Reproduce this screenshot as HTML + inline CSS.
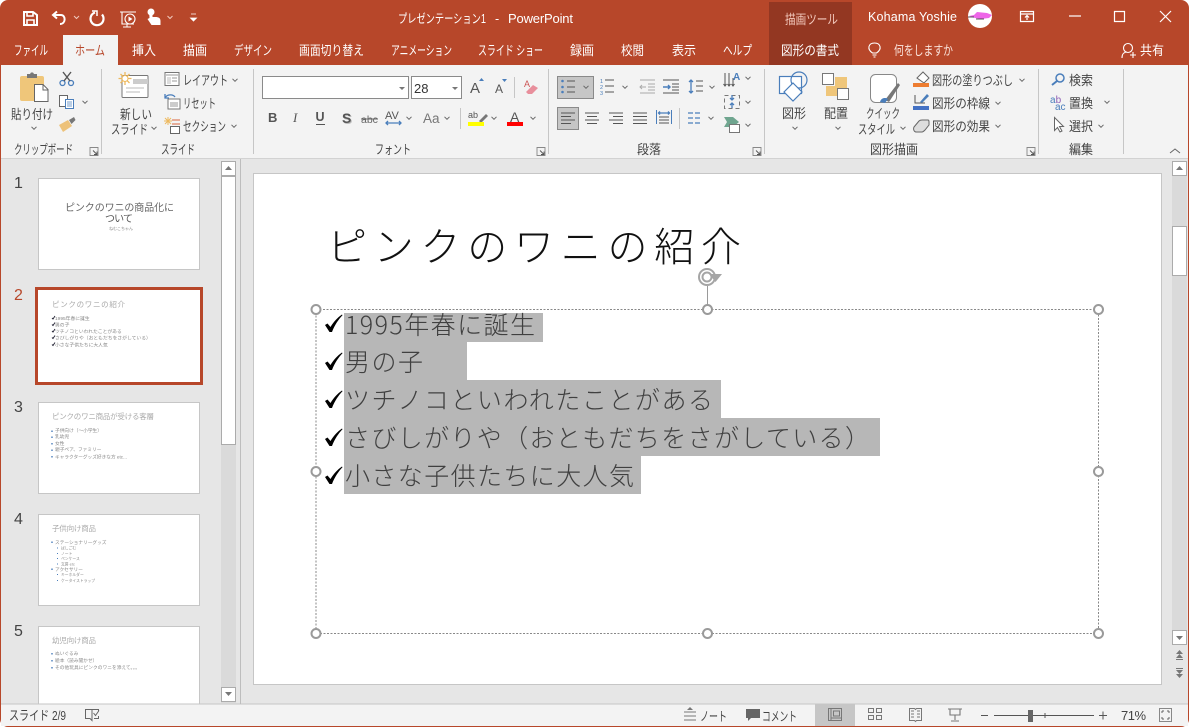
<!DOCTYPE html>
<html lang="ja"><head><meta charset="utf-8"><title>PowerPoint</title>
<style>
html,body{margin:0;padding:0;width:1189px;height:727px;overflow:hidden;background:#fff}
svg{display:block}
text{font-family:"Liberation Sans","Noto Sans CJK JP",sans-serif;font-size:13px;fill:#444}
.w text,text.w{fill:#fff}
.thin{font-weight:300}
.car{fill:none;stroke:#666;stroke-width:1}
.blu{stroke:#4a7ebb;fill:none;stroke-width:1.3}
.h{fill:#fff;stroke:#9a9a9a;stroke-width:2}
.b{font-family:"Noto Sans CJK JP","Liberation Sans",sans-serif;font-weight:300;font-size:25px;fill:#404040}
</style></head><body>
<svg width="1189" height="727" viewBox="0 0 1189 727" xmlns="http://www.w3.org/2000/svg">
<defs>
<g id="c"><path d="M-2.5 -1.2L0 1.3L2.5 -1.2" class="car"/></g>
<g id="launch"><path d="M0 0H8V8H0Z" fill="none" stroke="#888" stroke-width=".9"/><path d="M3 3L7 7M7 4V7H4" fill="none" stroke="#555" stroke-width=".9"/></g>
</defs>
<rect width="1189" height="727" rx="8" fill="#B7472A"/>
<!-- title bar -->
<rect x="769" y="2" width="83" height="63" fill="#933722"/>
<g fill="none" stroke="#fff" stroke-width="2">
<path d="M24 12H33L37 15V25H24Z"/><path d="M27 12V16H33V12M27 25V20H34V25" stroke-width="1.6"/>
<path d="M54 15H61C66 15 66 24 60 24" stroke-width="2"/><path d="M57 11.5L53 15L57 18.5" stroke-width="2"/>
<path d="M95 12.5A6.5 6.5 0 1 0 102 14.5" stroke-width="2.200"/><path d="M92 11H97V16" stroke-width="1.500"/>
<path d="M120 12H136M122 12V24H134" stroke-width="1.100"/><circle cx="130" cy="19" r="5" stroke-width="1.100"/><path d="M128.500 16.500L132.500 19L128.500 21.500Z" fill="#fff" stroke="none"/><path d="M127 24V27M123 27H131" stroke-width="1"/>
</g>
<path d="M149 10h3.500v7h3c3 0 5 1 5 4v4h-9l-4-6 2-1 z" fill="#fff"/><circle cx="151" cy="12" r="3.500" fill="#fff"/>
<path d="M74 16l2.500 2.500 2.500-2.500M167.500 16l2.500 2.500 2.500-2.500" fill="none" stroke="#f0c8bc"/>
<path d="M191 14h5M190.500 18h6l-3 3z" fill="#fff" stroke="#fff" stroke-width=".8"/>
<text x="398" y="23" style="fill:#fff;font-size:12.500px" textLength="88" lengthAdjust="spacingAndGlyphs">プレゼンテーション1</text>
<text x="495" y="23" style="fill:#fff;font-size:12.500px">-</text>
<text x="508" y="23" style="fill:#fff;font-size:13px" textLength="65">PowerPoint</text>
<text x="785" y="24" style="fill:#f3c9bd;font-size:13px" textLength="53" lengthAdjust="spacingAndGlyphs">描画ツール</text>
<text x="868" y="21" style="fill:#fff;font-size:12.500px" textLength="89">Kohama Yoshie</text>
<circle cx="980" cy="16" r="12" fill="#fff"/>
<path d="M969 16l5-1 3-3 10 1 5 2-3 3-8 1-6-1z" fill="#ee66e8"/><path d="M968 17h6M976 19h8" stroke="#222" stroke-width=".8"/>
<g fill="none" stroke="#fff" stroke-width="1.200">
<path d="M1020.500 11.500H1033.500V21.500H1020.500ZM1021 14H1033M1027 20V16M1025 17.500L1027 15.500L1029 17.500"/>
<path d="M1069 16H1081" /><path d="M1114.500 11.500H1124.500V21.500H1114.500Z"/><path d="M1160 11L1171 22M1171 11L1160 22"/>
</g>
<!-- tabs -->
<rect x="63" y="35" width="55" height="31" fill="#F3F3F3"/>
<rect x="769" y="35" width="83" height="30" fill="#933722"/>
<g class="w">
<text x="14" y="55" textLength="34" lengthAdjust="spacingAndGlyphs">ファイル</text>
<text x="75" y="55" style="fill:#B7472A" textLength="30" lengthAdjust="spacingAndGlyphs">ホーム</text>
<text x="132" y="55" textLength="24" lengthAdjust="spacingAndGlyphs">挿入</text>
<text x="183" y="55" textLength="24" lengthAdjust="spacingAndGlyphs">描画</text>
<text x="234" y="55" textLength="38" lengthAdjust="spacingAndGlyphs">デザイン</text>
<text x="299" y="55" textLength="65" lengthAdjust="spacingAndGlyphs">画面切り替え</text>
<text x="391" y="55" textLength="61" lengthAdjust="spacingAndGlyphs">アニメーション</text>
<text x="478" y="55" textLength="65" lengthAdjust="spacingAndGlyphs">スライド ショー</text>
<text x="570" y="55" textLength="24" lengthAdjust="spacingAndGlyphs">録画</text>
<text x="621" y="55" textLength="23" lengthAdjust="spacingAndGlyphs">校閲</text>
<text x="672" y="55" textLength="24" lengthAdjust="spacingAndGlyphs">表示</text>
<text x="723" y="55" textLength="29" lengthAdjust="spacingAndGlyphs">ヘルプ</text>
<text x="781" y="55" textLength="58" lengthAdjust="spacingAndGlyphs">図形の書式</text>
<text x="894" y="55" style="fill:#fbe6df" textLength="59" lengthAdjust="spacingAndGlyphs">何をしますか</text>
<text x="1140" y="55" textLength="24" lengthAdjust="spacingAndGlyphs">共有</text>
</g>
<g fill="none" stroke="#fff" stroke-width="1.100"><path d="M872.500 53c-6-4-4-10 2-10s8 6 2 10zM872.500 55h4M873.500 57h2"/><circle cx="1128" cy="48" r="4.500"/><path d="M1122 58c0-5 3-6 5-6M1130 55h6M1133 52v6"/></g>
<!-- ribbon -->
<rect x="1" y="65" width="1187" height="94" fill="#F3F3F3"/>
<rect x="1" y="158" width="1187" height="1" fill="#d2d2d2"/>
<!-- body -->
<rect x="1" y="159" width="1187" height="545" fill="#E6E6E6"/>
<!-- separators -->
<g fill="#c6c6c6"><rect x="101" y="69" width="1" height="85"/><rect x="253" y="69" width="1" height="85"/><rect x="548" y="69" width="1" height="85"/><rect x="764" y="69" width="1" height="85"/><rect x="1038" y="69" width="1" height="85"/><rect x="1123" y="69" width="1" height="85"/>
<rect x="514" y="77" width="1" height="21"/><rect x="460" y="108" width="1" height="21"/><rect x="679" y="108" width="1" height="21"/></g>
<!-- clipboard -->
<rect x="20" y="76" width="24" height="25" rx="2" fill="#EFC67A"/><path d="M27 78V74H30L31 72.500H33L34 74H37V78Z" fill="#777"/>
<path d="M34.500 84.500H43L48 89.500V101.500H34.500Z" fill="#fff" stroke="#666"/><path d="M43 85V90H48" fill="none" stroke="#666"/>
<text x="11" y="119" textLength="42" lengthAdjust="spacingAndGlyphs">貼り付け</text><use href="#c" x="34" y="128"/>
<g fill="none" stroke="#4a7ebb" stroke-width="1.300"><circle cx="62.500" cy="83" r="2.500"/><circle cx="71" cy="83" r="2.500"/></g><path d="M64 81L71 72M70 81L63 72" stroke="#555" stroke-width="1.400"/>
<rect x="59.500" y="95.500" width="8" height="11" fill="#fff" stroke="#666"/><rect x="65.500" y="99.500" width="8" height="9" fill="#fff" stroke="#4a7ebb"/><path d="M67 102h5M67 104h5M67 106h5" stroke="#4a7ebb" stroke-width=".8"/><use href="#c" x="85" y="102"/>
<path d="M59 125l9-5 4 6-9 6z" fill="#EDC27A"/><path d="M69 120l5-3 1.500 3-4 4z" fill="#777"/>
<text x="14" y="154" textLength="59" lengthAdjust="spacingAndGlyphs">クリップボード</text><use href="#launch" x="90" y="147.500"/>
<!-- slide -->
<rect x="122" y="75.500" width="26" height="22" rx="1" fill="#fff" stroke="#777"/><rect x="133" y="79" width="15" height="5" fill="#ccc"/><path d="M126 88h18M126 92h14" stroke="#bbb"/>
<path d="M125 72v13M118.500 78.500h13M120.500 74l9 9M129.500 74l-9 9" stroke="#EDB95E" stroke-width="1.300"/><circle cx="125" cy="78.500" r="3" fill="#fff" stroke="#EDB95E"/>
<text x="120" y="119" textLength="32" lengthAdjust="spacingAndGlyphs">新しい</text><text x="111" y="134" textLength="37" lengthAdjust="spacingAndGlyphs">スライド</text><use href="#c" x="154" y="128"/>
<rect x="165" y="72.500" width="14" height="13" fill="#fff" stroke="#777"/><rect x="167" y="77" width="4" height="7" fill="#ddd"/><path d="M166 75h12M172 78h5M172 81h5" stroke="#999"/>
<rect x="168" y="99" width="12" height="10" fill="#fff" stroke="#777"/><path d="M165 98c2-4 8-4 10-1M165 94v4h4" fill="none" stroke="#4a7ebb" stroke-width="1.300"/><rect x="170" y="102" width="8" height="5" fill="#ccc"/>
<path d="M168 117v8M164 121h8M165 118l6 6M171 118l-6 6" stroke="#EDB95E"/><path d="M172 120h8M172 124h8" stroke="#D9663E"/><rect x="170.500" y="126.500" width="9" height="7" fill="#fff" stroke="#666"/>
<text x="183" y="85" textLength="45" lengthAdjust="spacingAndGlyphs">レイアウト</text><use href="#c" x="235" y="80"/>
<text x="183" y="108" textLength="33" lengthAdjust="spacingAndGlyphs">リセット</text>
<text x="183" y="131" textLength="43" lengthAdjust="spacingAndGlyphs">セクション</text><use href="#c" x="234" y="126"/>
<text x="161" y="154" textLength="34" lengthAdjust="spacingAndGlyphs">スライド</text>
<!-- font -->
<rect x="262.500" y="76.500" width="146" height="22" fill="#fff" stroke="#8a8a8a"/><rect x="411.500" y="76.500" width="50" height="22" fill="#fff" stroke="#8a8a8a"/>
<path d="M399 87h6l-3 3zM452 87h6l-3 3z" fill="#777"/>
<text x="414" y="93" style="font-size:13px;fill:#333">28</text>
<text x="470" y="93" style="font-size:15px;fill:#555">A</text><path d="M479 81h5l-2.500-3z" fill="#4a7ebb"/>
<text x="495" y="93" style="font-size:12px;fill:#555">A</text><path d="M502 79h5l-2.500 3z" fill="#4a7ebb"/>
<text x="524" y="87" style="font-size:9px;fill:#c55">A</text><path d="M526 92l7-7 5 3-6 6h-4z" fill="#E88F9C"/>
<text x="268" y="122" style="font-size:13px;font-weight:bold;fill:#555">B</text>
<text x="293" y="122" style="font-size:13px;font-style:italic;font-family:'Liberation Serif';fill:#555">I</text>
<text x="315.500" y="121" style="font-size:12.500px;font-weight:bold;fill:#555">U</text><path d="M316 124.500h9" stroke="#555"/>
<text x="343" y="124" style="font-size:14px;font-weight:bold;fill:#bbb">S</text><text x="342" y="123" style="font-size:14px;font-weight:bold;fill:#555">S</text>
<text x="361" y="123" style="font-size:10.500px;fill:#666">abc</text><path d="M361 119h17" stroke="#666"/>
<text x="385" y="119" style="font-size:11px;fill:#555">AV</text><path d="M386 123h15M388 121l-2 2 2 2M399 121l2 2-2 2" class="blu"/><use href="#c" x="409" y="118"/>
<text x="423" y="123" style="font-size:13.500px;fill:#777">Aa</text><use href="#c" x="447" y="118"/>
<text x="468" y="118" style="font-size:9px;fill:#555">ab</text><path d="M479 121l7-7 2 2-7 7z" fill="#777"/><rect x="468" y="122" width="16" height="4" fill="#FFFF00"/><use href="#c" x="494" y="118"/>
<text x="510" y="122" style="font-size:14px;fill:#555">A</text><rect x="507" y="122" width="16" height="4" fill="#FF0000"/><use href="#c" x="533" y="118"/>
<text x="375" y="154" textLength="36" lengthAdjust="spacingAndGlyphs">フォント</text><use href="#launch" x="537" y="147.500"/>
<!-- paragraph -->
<rect x="557.500" y="76.500" width="36" height="22" fill="#C6C6C6" stroke="#8a8a8a"/>
<path d="M567 81h8M567 87h8M567 92h8" stroke="#555"/><g fill="#4a7ebb"><circle cx="562.500" cy="81" r="1.300"/><circle cx="562.500" cy="87" r="1.300"/><circle cx="562.500" cy="92" r="1.300"/></g><use href="#c" x="586" y="87"/>
<path d="M605 80h9M605 86h9M605 92h9" stroke="#555"/><text x="600" y="83" style="font-size:5.500px;fill:#4a7ebb">1</text><text x="600" y="89" style="font-size:5.500px;fill:#4a7ebb">2</text><text x="600" y="95" style="font-size:5.500px;fill:#4a7ebb">3</text><use href="#c" x="625" y="87"/>
<path d="M640 80h15M648 84h7M648 87h7M648 90h7M640 93h15" stroke="#aaa"/><path d="M646 87h-6M642 85l-2 2 2 2" stroke="#aaa" fill="none"/>
<path d="M663 80h16M672 84h7M672 87h7M672 90h7M663 93h16" stroke="#555"/><path d="M663 87h7M668 85l2 2-2 2" stroke="#4a7ebb" fill="none" stroke-width="1.400"/>
<path d="M691 80v13M689 82l2-2 2 2M689 91l2 2 2-2" class="blu"/><path d="M696 81h7M696 86h7M696 91h7" stroke="#555"/><use href="#c" x="712" y="87"/>
<path d="M725 73v13M729 73v13M733 78v8M723.500 84l1.500 2 1.500-2M727.500 84l1.500 2 1.500-2M731.500 84l1.500 2 1.500-2" stroke="#555" fill="none"/><text x="733" y="80" style="font-size:10px;font-weight:bold;fill:#4a7ebb">A</text><use href="#c" x="748" y="78"/>
<rect x="724.500" y="95.500" width="15" height="13" fill="none" stroke="#777" stroke-dasharray="4 3"/><path d="M732 95v5M730 98l2 2 2-2M732 108v-5M730 105l2-2 2 2" class="blu"/><use href="#c" x="748" y="102"/>
<path d="M724 117h9l6 5-6 5h-9l3-5z" fill="#6FA58F"/><rect x="729.500" y="124.500" width="10" height="8" fill="#fff" stroke="#777"/><use href="#c" x="748" y="125"/>
<rect x="557.500" y="107.500" width="21" height="22" fill="#C6C6C6" stroke="#8a8a8a"/>
<path d="M561 113h14M561 116.500h10M561 120h14M561 123.500h10" stroke="#555"/>
<path d="M585 113h14M587 116.500h10M585 120h14M587 123.500h10" stroke="#555"/>
<path d="M609 113h14M613 116.500h10M609 120h14M613 123.500h10" stroke="#555"/>
<path d="M633 113h14M633 116.500h14M633 120h14M633 123.500h14" stroke="#555"/>
<path d="M656.500 110v14M671.500 110v14" stroke="#4a7ebb"/><path d="M659 113h10M660 111.500l-1.500 1.500 1.500 1.500M668 111.500l1.500 1.500-1.500 1.500" class="blu" stroke-width="1"/><path d="M659 117h10M659 120h10M659 123h10" stroke="#555"/>
<path d="M688 113h5M688 118h5M688 123h5M695 113h5M695 118h5M695 123h5" stroke="#4a7ebb" stroke-width="1.200"/><use href="#c" x="711" y="118"/>
<text x="637" y="154" textLength="24" lengthAdjust="spacingAndGlyphs">段落</text><use href="#launch" x="753" y="147.500"/>
<!-- shapes -->
<rect x="779.500" y="76.500" width="22" height="17" fill="#fff" stroke="#4a7ebb" stroke-width="1.200"/><circle cx="799" cy="80" r="8" fill="none" stroke="#4a7ebb" stroke-width="1.200"/><path d="M793 83l9 9-9 9-9-9z" fill="#fff" stroke="#4a7ebb" stroke-width="1.200"/>
<text x="782" y="118" textLength="24" lengthAdjust="spacingAndGlyphs">図形</text><use href="#c" x="795" y="128"/>
<rect x="835" y="77" width="12" height="13" fill="#EFC67A"/><rect x="826" y="86" width="12" height="10" fill="#EFC67A"/><rect x="822.500" y="73.500" width="11" height="11" fill="#fff" stroke="#777"/><rect x="837.500" y="88.500" width="11" height="11" fill="#fff" stroke="#777"/>
<text x="824" y="118" textLength="24" lengthAdjust="spacingAndGlyphs">配置</text><use href="#c" x="838" y="128"/>
<rect x="870.500" y="74.500" width="26" height="28" rx="5" fill="#fff" stroke="#888"/><path d="M885 100l13-17 2 2-11 17z" fill="#777"/><path d="M880 102c1-4 5-5 8-3l-3 4z" fill="#4a7ebb"/>
<text x="866" y="118" textLength="34" lengthAdjust="spacingAndGlyphs">クイック</text><text x="858" y="134" textLength="37" lengthAdjust="spacingAndGlyphs">スタイル</text><use href="#c" x="903" y="128"/>
<path d="M917 78l6-6 6 6-5 5z" fill="#fff" stroke="#666"/><rect x="913" y="83" width="16" height="4" fill="#ED7D31"/>
<path d="M915 95v8h10" fill="none" stroke="#555"/><path d="M920 102l7-8 2 2-7 7z" fill="#4a7ebb"/><rect x="913" y="106" width="16" height="4" fill="#4472C4"/>
<path d="M914 127l5-6c1-1 2-1 3-1h6c1 0 1 1 1 2v3l-4 5c-1 1-2 2-3 2h-6c-2 0-3-3-2-5z" fill="#ddd" stroke="#666"/>
<g><text x="932" y="85" textLength="81" lengthAdjust="spacingAndGlyphs">図形の塗りつぶし</text><use href="#c" x="1022" y="80"/>
<text x="932" y="108" textLength="58" lengthAdjust="spacingAndGlyphs">図形の枠線</text><use href="#c" x="998" y="103"/>
<text x="932" y="131" textLength="58" lengthAdjust="spacingAndGlyphs">図形の効果</text><use href="#c" x="998" y="126"/></g>
<text x="870" y="154" textLength="48" lengthAdjust="spacingAndGlyphs">図形描画</text><use href="#launch" x="1027" y="147.500"/>
<!-- editing -->
<circle cx="1060" cy="78" r="4" fill="none" stroke="#4a7ebb" stroke-width="1.500"/><path d="M1057 81l-5 4" stroke="#4a7ebb" stroke-width="2"/>
<text x="1050" y="103" style="font-size:10px;fill:#4a7ebb">a<tspan style="fill:#8e5fb5">b</tspan></text><text x="1055" y="110" style="font-size:10px;fill:#4a7ebb">ac</text>
<path d="M1054.500 117.500v13l3-3 2.500 4.500 2-1-2.500-4.500h4z" fill="#fff" stroke="#666"/>
<text x="1069" y="85" textLength="24" lengthAdjust="spacingAndGlyphs">検索</text>
<text x="1069" y="108" textLength="24" lengthAdjust="spacingAndGlyphs">置換</text><use href="#c" x="1107" y="102"/>
<text x="1069" y="131" textLength="24" lengthAdjust="spacingAndGlyphs">選択</text><use href="#c" x="1101" y="126"/>
<text x="1069" y="154" textLength="24" lengthAdjust="spacingAndGlyphs">編集</text>
<path d="M1170 153l5-4 5 4" fill="none" stroke="#666"/>
<!-- left pane -->
<text x="14" y="188" style="font-size:16px;fill:#444">1</text><text x="14" y="300" style="font-size:16px;fill:#B7472A">2</text><text x="14" y="412" style="font-size:16px;fill:#444">3</text><text x="14" y="524" style="font-size:16px;fill:#444">4</text><text x="14" y="636" style="font-size:16px;fill:#444">5</text>
<g fill="#fff" stroke="#c6c6c6"><rect x="38.500" y="178.500" width="161" height="91"/><rect x="38.500" y="402.500" width="161" height="91"/><rect x="38.500" y="514.500" width="161" height="91"/><rect x="38.500" y="626.500" width="161" height="90"/></g>
<rect x="36.500" y="288.500" width="165" height="95" fill="#fff" stroke="#B7472A" stroke-width="3"/>
<text x="65" y="211" style="font-size:10px;fill:#666" textLength="109" lengthAdjust="spacing">ピンクのワニの商品化に</text>
<text x="105" y="222" style="font-size:10px;fill:#555" textLength="28">ついて</text>
<text x="109" y="230" style="font-size:4px;fill:#888">ねむこちゃん</text>
<text x="52" y="307" style="font-size:7.500px;fill:#aaa" textLength="73">ピンクのワニの紹介</text>
<g><text x="55" y="320" style="font-size:4.800px;fill:#888">1995年春に誕生</text><text x="55" y="326.500" style="font-size:4.800px;fill:#888">男の子</text><text x="55" y="333" style="font-size:4.800px;fill:#888">ツチノコといわれたことがある</text><text x="55" y="339.500" style="font-size:4.800px;fill:#888">さびしがりや（おともだちをさがしている）</text><text x="55" y="346.500" style="font-size:4.800px;fill:#888">小さな子供たちに大人気</text></g>
<path d="M52 318l1 1 2-3M52 324.500l1 1 2-3M52 331l1 1 2-3M52 337.500l1 1 2-3M52 344.500l1 1 2-3" fill="none" stroke="#223" stroke-width=".9"/>
<text x="52" y="419" style="font-size:7.500px;fill:#aaa" textLength="102">ピンクのワニ商品が受ける客層</text>
<g><text x="55" y="432" style="font-size:4.700px;fill:#888">子供向け（〜小学生）</text><text x="55" y="438" style="font-size:4.700px;fill:#888">乳幼児</text><text x="55" y="445" style="font-size:4.700px;fill:#888">女性</text><text x="55" y="451" style="font-size:4.700px;fill:#888">親子ペア、ファミリー</text><text x="55" y="458.500" style="font-size:4.700px;fill:#888" textLength="72">キャラクターグッズ好きな方 etc...</text></g>
<path d="M52 430.500v1.500M52 436.500v1.500M52 443v1.500M52 449.500v1.500M52 456v1.500" stroke="#4a7ebb" stroke-width="1.400"/>
<text x="52" y="531" style="font-size:7.500px;fill:#aaa" textLength="44">子供向け商品</text>
<g><text x="55" y="544" style="font-size:4.700px;fill:#888">ステーショナリーグッズ</text><text x="61" y="549.500" style="font-size:3.800px;fill:#888">ぱしごむ</text><text x="61" y="555" style="font-size:3.800px;fill:#888">ノート</text><text x="61" y="560" style="font-size:3.800px;fill:#888">ペンケース</text><text x="61" y="565.500" style="font-size:3.800px;fill:#888">文房 etc</text><text x="55" y="571" style="font-size:4.700px;fill:#888">アクセサリー</text><text x="61" y="576" style="font-size:3.800px;fill:#888">キーホルダー</text><text x="61" y="582" style="font-size:3.800px;fill:#888">ケータイストラップ</text></g>
<path d="M52 541.500v1.500M52 568.500v1.500" stroke="#4a7ebb" stroke-width="1.400"/><path d="M57.500 547.500v1M57.500 553v1M57.500 558v1M57.500 563.500v1M57.500 574v1M57.500 580v1" stroke="#4a7ebb"/>
<text x="52" y="643" style="font-size:7.500px;fill:#aaa" textLength="44">幼児向け商品</text>
<g><text x="55" y="655" style="font-size:4.700px;fill:#888">ぬいぐるみ</text><text x="55" y="662" style="font-size:4.700px;fill:#888">絵本（読み聞かせ）</text><text x="55" y="669" style="font-size:4.700px;fill:#888" textLength="85">その他玩具にピンクのワニを添えて。。。</text></g>
<path d="M52 653v1.500M52 660v1.500M52 667v1.500" stroke="#4a7ebb" stroke-width="1.400"/>
<!-- status -->
<rect x="1" y="704" width="1187" height="22" fill="#F3F3F3"/>
<rect x="1" y="703.500" width="1187" height="1" fill="#c6c6c6"/>
<!-- left scrollbar -->
<rect x="221" y="161" width="15" height="542" fill="#DADADA"/>
<rect x="221.500" y="161.500" width="14" height="14" fill="#fff" stroke="#ababab"/><path d="M225 170h7l-3.500-4z" fill="#777"/>
<rect x="221.500" y="176.500" width="14" height="268" fill="#fff" stroke="#ababab"/>
<rect x="221.500" y="687.500" width="14" height="14" fill="#fff" stroke="#ababab"/><path d="M225 692h7l-3.500 4z" fill="#777"/>
<rect x="240" y="159" width="1" height="545" fill="#bdbdbd"/>
<!-- slide main -->
<rect x="253.500" y="173.500" width="908" height="511" fill="#fff" stroke="#c6c6c6"/>
<text x="327" y="261" class="thin" style="font-size:40px;fill:#111;font-family:'Noto Sans CJK JP','Liberation Sans',sans-serif" textLength="414" lengthAdjust="spacing">ピンクのワニの紹介</text>
<g fill="#B7B7B7"><rect x="344" y="313" width="199" height="29"/><rect x="344" y="342" width="123" height="38"/><rect x="344" y="380" width="377" height="38"/><rect x="344" y="418" width="536" height="38"/><rect x="344" y="456" width="297" height="38"/></g>
<text x="345" y="334" class="b" textLength="190" lengthAdjust="spacing">1995年春に誕生</text>
<text x="345" y="371" class="b" textLength="78" lengthAdjust="spacing">男の子</text>
<text x="345" y="409" class="b" textLength="368" lengthAdjust="spacing">ツチノコといわれたことがある</text>
<text x="345" y="447" class="b" textLength="525" lengthAdjust="spacing">さびしがりや（おともだちをさがしている）</text>
<text x="345" y="485" class="b" textLength="289" lengthAdjust="spacing">小さな子供たちに大人気</text>
<g fill="#000">
<path d="M325 325l2.500-1.500 3 3.500c3-5 7-9.500 11.500-12.500l.5.800c-4 4-8 10.200-10.500 16.700h-2.500z"/>
<path d="M325 363l2.500-1.500 3 3.500c3-5 7-9.500 11.500-12.500l.5.800c-4 4-8 10.200-10.500 16.700h-2.500z"/>
<path d="M325 401l2.500-1.500 3 3.500c3-5 7-9.500 11.500-12.500l.5.800c-4 4-8 10.200-10.500 16.700h-2.500z"/>
<path d="M325 439l2.500-1.500 3 3.500c3-5 7-9.500 11.500-12.500l.5.800c-4 4-8 10.200-10.500 16.700h-2.500z"/>
<path d="M325 477l2.500-1.500 3 3.500c3-5 7-9.500 11.500-12.500l.5.800c-4 4-8 10.200-10.500 16.700h-2.500z"/>
</g>
<!-- selection -->
<rect x="316" y="309.500" width="782.500" height="324" fill="none" stroke="#888" stroke-dasharray="2 1.500"/>
<path d="M707.500 286V305" stroke="#9a9a9a"/>
<g fill="none" stroke="#a5a5a5" stroke-width="2"><circle cx="707" cy="277" r="8"/><circle cx="707" cy="277" r="4.500"/></g><path d="M709 274h13l-6.500 8z" fill="#a5a5a5"/>
<circle class="h" cx="316" cy="309.500" r="4.500"/><circle class="h" cx="707.500" cy="309.500" r="4.500"/><circle class="h" cx="1098.500" cy="309.500" r="4.500"/><circle class="h" cx="316" cy="471.500" r="4.500"/><circle class="h" cx="1098.500" cy="471.500" r="4.500"/><circle class="h" cx="316" cy="633.500" r="4.500"/><circle class="h" cx="707.500" cy="633.500" r="4.500"/><circle class="h" cx="1098.500" cy="633.500" r="4.500"/>
<!-- right scrollbar -->
<rect x="1172" y="161" width="15" height="484" fill="#DADADA"/>
<rect x="1172.500" y="161.500" width="14" height="14" fill="#fff" stroke="#ababab"/><path d="M1176 170h7l-3.500-4z" fill="#777"/>
<rect x="1172.500" y="226.500" width="14" height="49" fill="#fff" stroke="#ababab"/>
<rect x="1172.500" y="630.500" width="14" height="14" fill="#fff" stroke="#ababab"/><path d="M1176 636h7l-3.500 4z" fill="#777"/>
<path d="M1176 654h7l-3.500-4zM1176 658h7l-3.500-4z" fill="#777"/><path d="M1176 659.500h7" stroke="#777"/>
<path d="M1176 668.500h7" stroke="#777"/><path d="M1176 670h7l-3.500 4zM1176 674h7l-3.500 4z" fill="#777"/>
<!-- status content -->
<text x="9" y="720" textLength="57" lengthAdjust="spacingAndGlyphs">スライド 2/9</text>
<path d="M85.500 709.500H92V720.500L90 718.500H85.500ZM92 709.500H98.500V711.500M98.500 716V718.500H94" fill="none" stroke="#666"/><path d="M93.500 713l2 2.500 3.500-5" fill="none" stroke="#666"/>
<path d="M684 712h12M684 716h12M684 720h12" stroke="#777"/><path d="M687 710h6l-3-3z" fill="#777"/>
<text x="700" y="721" textLength="27" lengthAdjust="spacingAndGlyphs">ノート</text>
<path d="M746 709h14v9h-9l-3 3v-3h-2z" fill="#666"/>
<text x="762" y="721" textLength="35" lengthAdjust="spacingAndGlyphs">コメント</text>
<rect x="815" y="704" width="40" height="22" fill="#C6C6C6"/>
<path d="M828.500 708.500h13v12h-13zM831 708.500v12M833.500 711h6v5h-6zM831 718h10.500" fill="none" stroke="#777"/>
<path d="M868.500 708.500h5v4h-5zM876.500 708.500h5v4h-5zM868.500 715.500h5v4h-5zM876.500 715.500h5v4h-5z" fill="none" stroke="#777"/>
<path d="M909.500 708.500h5l1 1 1-1h5v12h-5l-1 1-1-1h-5zM911 711h3M911 714h3M911 717h3M917 711h3M917 714h3M917 717h3" fill="none" stroke="#777"/>
<path d="M948 709h14M950 709v6h10v-6M955 715v5M951 721h8" fill="none" stroke="#777" stroke-width="1.100"/>
<path d="M981 715.500h7M994 715.500h100" stroke="#555"/><rect x="1028" y="710" width="5" height="12" fill="#666"/><path d="M1045 713v5" stroke="#555"/>
<path d="M1099 715.500h8M1103 711.500v8" stroke="#555"/>
<text x="1121" y="720" style="font-size:13px" textLength="25">71%</text>
<path d="M1159.500 708.500h12v13h-12z" fill="none" stroke="#888"/><path d="M1162 711h2M1162 711v2M1169 711h-2M1169 711v2M1162 719h2M1162 719v-2M1169 719h-2M1169 719v-2" stroke="#666"/>
</svg>
</body></html>
